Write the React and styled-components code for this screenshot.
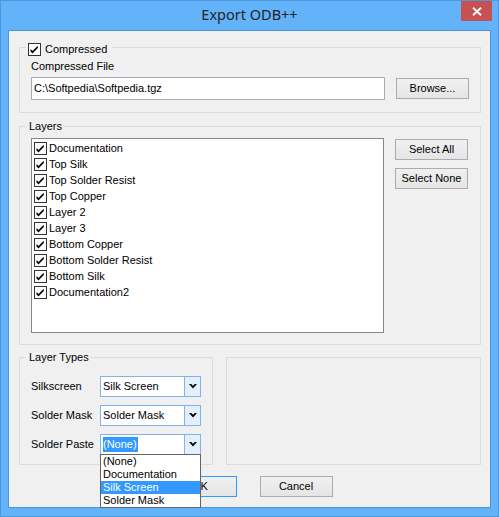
import React from 'react';
import styled, { createGlobalStyle } from 'styled-components';

const Global = createGlobalStyle`
  html, body { margin: 0; padding: 0; background: #ffffff; }
  body { font-family: "Liberation Sans", Arial, sans-serif; font-size: 11px; color: #000; }
  * { box-sizing: border-box; }
`;

const Window = styled.div`
  width: 499px;
  height: 517px;
  border: 1px solid #4f97dc;
  background: #63b3fb;
  display: flex;
  flex-direction: column;
`;

const TitleBar = styled.div`
  height: 29px;
  display: grid;
  grid-template-columns: 1fr auto 1fr;
  align-items: start;
`;

const Title = styled.div`
  grid-column: 2;
  font-family: "Noto Sans", "Open Sans", sans-serif;
  font-size: 14.5px;
  line-height: 27px;
  color: #232323;
`;

const CloseButton = styled.div`
  grid-column: 3;
  justify-self: end;
  width: 31px;
  height: 20px;
  margin-right: 6px;
  background: #c75050;
  display: flex;
  align-items: center;
  justify-content: center;
`;

const Frame = styled.div`
  flex: 1;
  display: flex;
  padding: 0 7px 8px 7px;
`;

const Client = styled.div`
  flex: 1;
  border: 1px solid #4d95d8;
  background: #f0f0f0;
  padding: 16px 9px 10px 10px;
  display: flex;
  flex-direction: column;
`;

const Group = styled.div`
  position: relative;
  border: 1px solid #dcdcdc;
  height: ${p => p.$h}px;
`;

const Caption = styled.div`
  position: absolute;
  top: ${p => p.$top}px;
  left: 6px;
  padding: 0 ${p => p.$pr}px 0 ${p => p.$pl}px;
  background: #f0f0f0;
  line-height: 13px;
  display: flex;
  align-items: center;
  gap: 4px;
`;

const CompressGroup = styled(Group)`
  padding: 12px 11px 0 11px;
`;

const FieldLabel = styled.div`
  line-height: 13px;
  margin-bottom: 4px;
`;

const InputRow = styled.div`
  display: flex;
  align-items: center;
  gap: 11px;
`;

const TextBox = styled.div`
  width: 354px;
  height: 23px;
  border: 1px solid #abadb3;
  background: #ffffff;
  padding-left: 2px;
  line-height: 20px;
  white-space: nowrap;
`;

const Button = styled.div`
  width: 73px;
  height: 21px;
  border: 1px solid ${p => (p.$default ? '#3399ff' : '#acacac')};
  background: linear-gradient(#f0f0f0, #e5e5e5);
  display: flex;
  align-items: center;
  justify-content: center;
  line-height: 13px;
`;

const LayersGroup = styled(Group)`
  margin-top: 13px;
  padding: 11px 12px 11px 11px;
  display: flex;
  gap: 11px;
`;

const ListBox = styled.div`
  width: 353px;
  height: 195px;
  border: 1px solid #828790;
  background: #ffffff;
  padding: 2px 0 0 2px;
`;

const ListRow = styled.div`
  height: 16px;
  display: flex;
  align-items: flex-start;
  gap: 2px;
`;

const CheckBoxBox = styled.svg`
  flex: none;
  margin-top: ${p => p.$mt || 0}px;
`;

const ItemText = styled.span`
  line-height: 14px;
  white-space: nowrap;
`;

const ButtonColumn = styled.div`
  display: flex;
  flex-direction: column;
  gap: 8px;
  margin-top: 1px;
`;

const BottomRow = styled.div`
  margin-top: 12px;
  height: 108px;
  display: flex;
  gap: 13px;
`;

const TypesGroup = styled(Group)`
  width: 194px;
  padding: 18px 11px 9px 11px;
  display: flex;
  flex-direction: column;
  gap: 8px;
`;

const EmptyGroup = styled(Group)`
  flex: 1;
`;

const TypeRow = styled.div`
  height: 21px;
  display: flex;
  align-items: center;
`;

const TypeLabel = styled.div`
  width: 69px;
  line-height: 13px;
  white-space: nowrap;
`;

const Combo = styled.div`
  position: relative;
  width: 101px;
  height: 21px;
  border: 1px solid #7eb4ea;
  background: #ffffff;
  display: flex;
`;

const ComboText = styled.div`
  flex: 1;
  padding-left: 2px;
  display: flex;
  align-items: center;
  line-height: 13px;
  white-space: nowrap;
`;

const Selected = styled.span`
  background: #3399ff;
  color: #ffffff;
  padding: 0 1px 1px 0;
  line-height: 14px;
`;

const ComboButton = styled.div`
  width: 16px;
  border-left: 1px solid #7eb4ea;
  background: #e3effc;
  display: flex;
  align-items: center;
  justify-content: center;
`;

const DropList = styled.div`
  position: absolute;
  top: 100%;
  left: -1px;
  width: 101px;
  border: 1px solid #646464;
  background: #ffffff;
  z-index: 10;
`;

const DropItem = styled.div`
  height: 13px;
  line-height: 13px;
  padding-left: 2px;
  background: ${p => (p.$active ? '#3399ff' : 'transparent')};
  color: ${p => (p.$active ? '#ffffff' : '#000000')};
  white-space: nowrap;
`;

const ButtonRow = styled.div`
  margin-top: 11px;
  padding-right: 4px;
  display: flex;
  justify-content: center;
  gap: 23px;
`;

const CheckBox = ({ mt }) => (
  <CheckBoxBox width="13" height="13" viewBox="0 0 13 13" $mt={mt}>
    <rect x="0.5" y="0.5" width="12" height="12" fill="#ffffff" stroke="#333333" />
    <polygon points="2.5,6 4.5,8 9.8,2.7 9.8,5.1 4.5,10.4 2.5,8.4" fill="#000000" />
  </CheckBoxBox>
);

const Chevron = () => (
  <svg width="8" height="5" viewBox="0 0 8 5">
    <polygon points="0,0 2.2,0 4,1.8 5.8,0 8,0 4,4.5" fill="#000000" />
  </svg>
);

const layers = [
  'Documentation',
  'Top Silk',
  'Top Solder Resist',
  'Top Copper',
  'Layer 2',
  'Layer 3',
  'Bottom Copper',
  'Bottom Solder Resist',
  'Bottom Silk',
  'Documentation2',
];

const options = ['(None)', 'Documentation', 'Silk Screen', 'Solder Mask'];

export default function App() {
  return (
    <>
      <Global />
      <Window>
        <TitleBar>
          <Title>Export ODB++</Title>
          <CloseButton>
            <svg width="10" height="9" viewBox="0 0 10 9">
              <path d="M1 0.8 L9 8.2 M9 0.8 L1 8.2" stroke="#ffffff" strokeWidth="1.9" fill="none" />
            </svg>
          </CloseButton>
        </TitleBar>
        <Frame>
          <Client>
            <CompressGroup $h={66}>
              <Caption $top={-5} $pl={2} $pr={5}>
                <CheckBox />
                <span>Compressed</span>
              </Caption>
              <FieldLabel>Compressed File</FieldLabel>
              <InputRow>
                <TextBox>C:\Softpedia\Softpedia.tgz</TextBox>
                <Button>Browse...</Button>
              </InputRow>
            </CompressGroup>

            <LayersGroup $h={219}>
              <Caption $top={-7} $pl={3} $pr={2}>Layers</Caption>
              <ListBox>
                {layers.map(l => (
                  <ListRow key={l}>
                    <CheckBox mt={1} />
                    <ItemText>{l}</ItemText>
                  </ListRow>
                ))}
              </ListBox>
              <ButtonColumn>
                <Button>Select All</Button>
                <Button>Select None</Button>
              </ButtonColumn>
            </LayersGroup>

            <BottomRow>
              <TypesGroup $h={108}>
                <Caption $top={-7} $pl={3} $pr={2}>Layer Types</Caption>
                <TypeRow>
                  <TypeLabel>Silkscreen</TypeLabel>
                  <Combo>
                    <ComboText>Silk Screen</ComboText>
                    <ComboButton><Chevron /></ComboButton>
                  </Combo>
                </TypeRow>
                <TypeRow>
                  <TypeLabel>Solder Mask</TypeLabel>
                  <Combo>
                    <ComboText>Solder Mask</ComboText>
                    <ComboButton><Chevron /></ComboButton>
                  </Combo>
                </TypeRow>
                <TypeRow>
                  <TypeLabel>Solder Paste</TypeLabel>
                  <Combo>
                    <ComboText><Selected>(None)</Selected></ComboText>
                    <ComboButton><Chevron /></ComboButton>
                    <DropList>
                      {options.map(o => (
                        <DropItem key={o} $active={o === 'Silk Screen'}>{o}</DropItem>
                      ))}
                    </DropList>
                  </Combo>
                </TypeRow>
              </TypesGroup>
              <EmptyGroup $h={108} />
            </BottomRow>

            <ButtonRow>
              <Button $default>OK</Button>
              <Button>Cancel</Button>
            </ButtonRow>
          </Client>
        </Frame>
      </Window>
    </>
  );
}
